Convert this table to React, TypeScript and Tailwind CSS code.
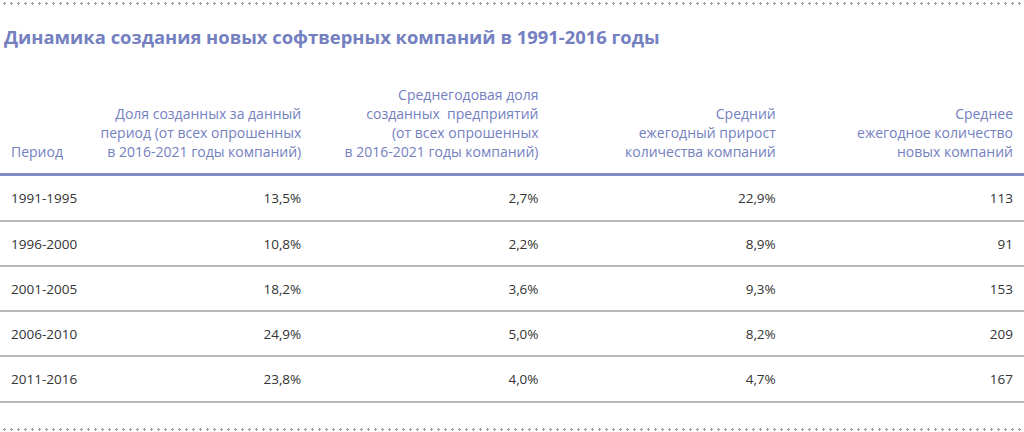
import React from "react";

const rows = [
  ["1991-1995", "13,5%", "2,7%", "22,9%", "113"],
  ["1996-2000", "10,8%", "2,2%", "8,9%", "91"],
  ["2001-2005", "18,2%", "3,6%", "9,3%", "153"],
  ["2006-2010", "24,9%", "5,0%", "8,2%", "209"],
  ["2011-2016", "23,8%", "4,0%", "4,7%", "167"],
];

function Dots() {
  return (
    <div
      className="h-[3px] w-full"
      style={{
        backgroundImage: "radial-gradient(circle, #9c9c9c 1px, transparent 1.3px)",
        backgroundSize: "7px 3px",
        backgroundPosition: "1px 0",
      }}
    />
  );
}

export default function App() {
  return (
    <div className="w-[1024px] h-[432px] bg-white overflow-hidden" style={{ fontFamily: '"Open Sans", "Noto Sans", sans-serif' }}>
      <div className="pt-[2px]">
        <Dots />
      </div>
      <h1 className="mt-[20px] pl-[4px] text-[18.4px] font-bold leading-[24px] text-[#7480bf]">
        Динамика создания новых софтверных компаний в 1991-2016 годы
      </h1>
      <table className="mt-[36px] w-full border-collapse table-fixed">
        <colgroup>
          <col className="w-[75px]" />
          <col />
          <col />
          <col />
          <col />
        </colgroup>
        <thead>
          <tr className="border-b-[3px] border-[#7f8bc4] text-[14px] leading-[19px] text-[#7480bf] align-bottom">
            <th className="font-normal text-left pl-[11px] pb-[12px] whitespace-nowrap">Период</th>
            <th className="font-normal text-right pr-[11px] pb-[12px]">
              Доля созданных за данный
              <br />
              период (от всех опрошенных
              <br />в 2016-2021 годы компаний)
            </th>
            <th className="font-normal text-right pr-[11px] pb-[12px]">
              Среднегодовая доля
              <br />
              созданных&nbsp; предприятий
              <br />
              (от всех опрошенных
              <br />в 2016-2021 годы компаний)
            </th>
            <th className="font-normal text-right pr-[11px] pb-[12px]">
              Средний
              <br />
              ежегодный прирост
              <br />
              количества компаний
            </th>
            <th className="font-normal text-right pr-[11px] pb-[12px]">
              Среднее
              <br />
              ежегодное количество
              <br />
              новых компаний
            </th>
          </tr>
        </thead>
        <tbody>
          {rows.map((r, i) => (
            <tr
              key={r[0]}
              className={`${i === 0 ? "h-[46px]" : "h-[45.25px]"} border-b-[2px] border-[#b8b8b8] text-[13.5px] text-[#333333]`}
            >
              <td className="pl-[11px] pt-[1px] whitespace-nowrap">{r[0]}</td>
              <td className="text-right pr-[11px] pt-[1px]">{r[1]}</td>
              <td className="text-right pr-[11px] pt-[1px]">{r[2]}</td>
              <td className="text-right pr-[11px] pt-[1px]">{r[3]}</td>
              <td className="text-right pr-[11px] pt-[1px]">{r[4]}</td>
            </tr>
          ))}
        </tbody>
      </table>
      <div className="mt-[25px]">
        <Dots />
      </div>
    </div>
  );
}
